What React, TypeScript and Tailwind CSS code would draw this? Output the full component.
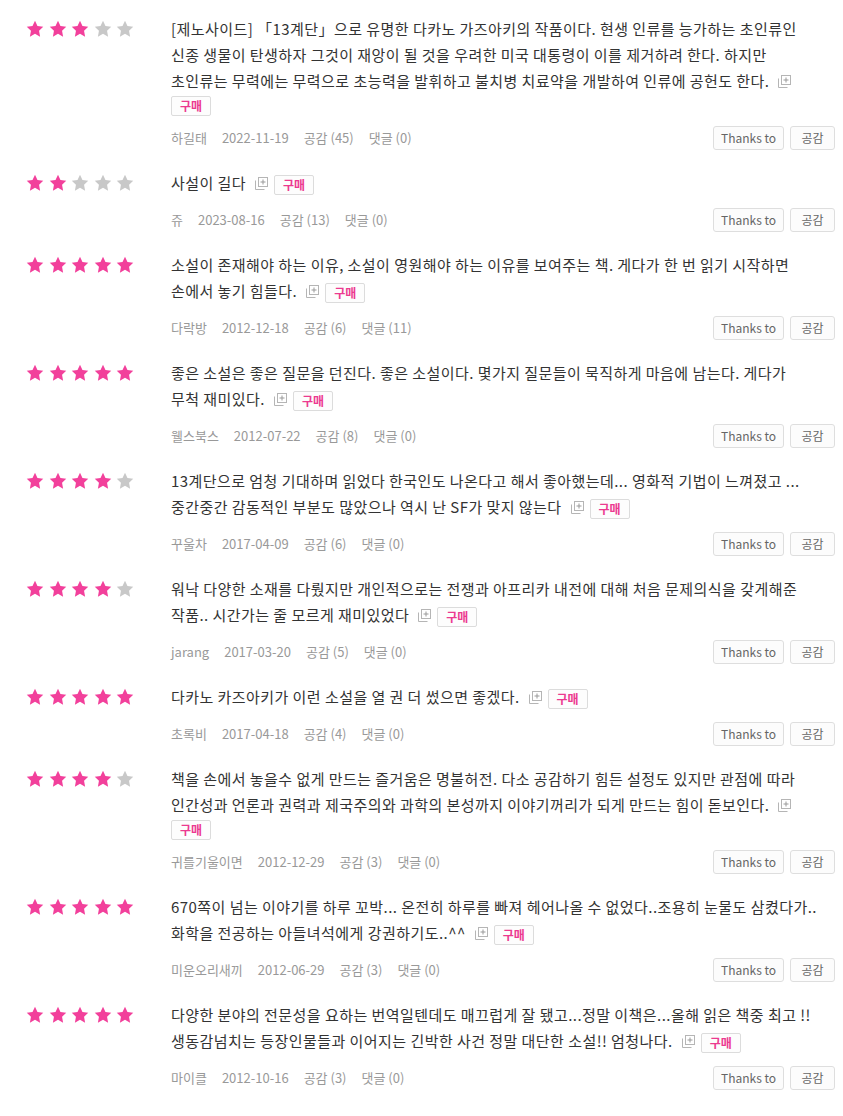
import React from 'react';

type Review = {
  stars: number;
  lines: string[];
  badgeOwnLine?: boolean;
  user: string;
  date: string;
  likes: number;
  comments: number;
};

const reviews: Review[] = [
  {
    stars: 3,
    lines: [
      '[제노사이드] 「13계단」으로 유명한 다카노 가즈아키의 작품이다. 현생 인류를 능가하는 초인류인',
      '신종 생물이 탄생하자 그것이 재앙이 될 것을 우려한 미국 대통령이 이를 제거하려 한다. 하지만',
      '초인류는 무력에는 무력으로 초능력을 발휘하고 불치병 치료약을 개발하여 인류에 공헌도 한다.',
    ],
    badgeOwnLine: true,
    user: '하길태',
    date: '2022-11-19',
    likes: 45,
    comments: 0,
  },
  { stars: 2, lines: ['사설이 길다'], user: '쥬', date: '2023-08-16', likes: 13, comments: 0 },
  {
    stars: 5,
    lines: [
      '소설이 존재해야 하는 이유, 소설이 영원해야 하는 이유를 보여주는 책. 게다가 한 번 읽기 시작하면',
      '손에서 놓기 힘들다.',
    ],
    user: '다락방',
    date: '2012-12-18',
    likes: 6,
    comments: 11,
  },
  {
    stars: 5,
    lines: ['좋은 소설은 좋은 질문을 던진다. 좋은 소설이다. 몇가지 질문들이 묵직하게 마음에 남는다. 게다가', '무척 재미있다.'],
    user: '웰스북스',
    date: '2012-07-22',
    likes: 8,
    comments: 0,
  },
  {
    stars: 4,
    lines: [
      '13계단으로 엄청 기대하며 읽었다 한국인도 나온다고 해서 좋아했는데... 영화적 기법이 느껴졌고 ...',
      '중간중간 감동적인 부분도 많았으나 역시 난 SF가 맞지 않는다',
    ],
    user: '꾸울차',
    date: '2017-04-09',
    likes: 6,
    comments: 0,
  },
  {
    stars: 4,
    lines: [
      '워낙 다양한 소재를 다뤘지만 개인적으로는 전쟁과 아프리카 내전에 대해 처음 문제의식을 갖게해준',
      '작품.. 시간가는 줄 모르게 재미있었다',
    ],
    user: 'jarang',
    date: '2017-03-20',
    likes: 5,
    comments: 0,
  },
  { stars: 5, lines: ['다카노 카즈아키가 이런 소설을 열 권 더 썼으면 좋겠다.'], user: '초록비', date: '2017-04-18', likes: 4, comments: 0 },
  {
    stars: 4,
    lines: [
      '책을 손에서 놓을수 없게 만드는 즐거움은 명불허전. 다소 공감하기 힘든 설정도 있지만 관점에 따라',
      '인간성과 언론과 권력과 제국주의와 과학의 본성까지 이야기꺼리가 되게 만드는 힘이 돋보인다.',
    ],
    badgeOwnLine: true,
    user: '귀를기울이면',
    date: '2012-12-29',
    likes: 3,
    comments: 0,
  },
  {
    stars: 5,
    lines: [
      '670쪽이 넘는 이야기를 하루 꼬박... 온전히 하루를 빠져 헤어나올 수 없었다..조용히 눈물도 삼켰다가..',
      '화학을 전공하는 아들녀석에게 강권하기도..^^',
    ],
    user: '미운오리새끼',
    date: '2012-06-29',
    likes: 3,
    comments: 0,
  },
  {
    stars: 5,
    lines: [
      '다양한 분야의 전문성을 요하는 번역일텐데도 매끄럽게 잘 됐고...정말 이책은...올해 읽은 책중 최고 !!',
      '생동감넘치는 등장인물들과 이어지는 긴박한 사건 정말 대단한 소설!! 엄청나다.',
    ],
    user: '마이클',
    date: '2012-10-16',
    likes: 3,
    comments: 0,
  },
];

const Star = ({ on }: { on: boolean }) => (
  <svg width="18" height="18" viewBox="0 0 24 24" className={on ? 'fill-[#f2409b]' : 'fill-[#c8c8c8]'}>
    <polygon points="12,1 15.3,8 23,9 17.4,14.4 18.8,22.2 12,18.4 5.2,22.2 6.6,14.4 1,9 8.7,8" />
  </svg>
);

const MoreIcon = () => (
  <svg width="13" height="13" viewBox="0 0 13 13" className="inline-block align-[-1px] ml-[9px]">
    <path d="M0.5 3.5 V12.5 H9.5" fill="none" stroke="#b5b5b5" />
    <rect x="3.5" y="0.5" width="9" height="9" fill="#fff" stroke="#b5b5b5" />
    <path d="M8 2.5 V7.5 M5.5 5 H10.5" stroke="#999" />
  </svg>
);

const Badge = ({ inline }: { inline?: boolean }) => (
  <span
    className={`inline-flex items-center justify-center w-[40px] h-[20px] border border-[#dcdcdc] rounded-[2px] bg-[#fdfdfd] text-[12px] font-bold tracking-normal text-[#ec3a90] leading-none align-middle ${
      inline ? 'ml-[6px]' : ''
    }`}
  >
    구매
  </span>
);

function Row({ r }: { r: Review }) {
  const last = r.lines.length - 1;
  return (
    <div className="flex">
      <div className="w-[171px] shrink-0 pl-[26px] pt-[4px] flex gap-[4.5px]">
        {[0, 1, 2, 3, 4].map((i) => (
          <Star key={i} on={i < r.stars} />
        ))}
      </div>
      <div className="flex-1 pr-[8px]">
        <div className="text-[15px] tracking-[0.45px] leading-[26px] text-[#333]">
          {r.lines.map((l, i) => (
            <div key={i} className="whitespace-nowrap">
              {l}
              {i === last && (
                <>
                  <MoreIcon />
                  {!r.badgeOwnLine && <Badge inline />}
                </>
              )}
            </div>
          ))}
          {r.badgeOwnLine && (
            <div className="h-[20px] pt-[2px] leading-none">
              <Badge />
            </div>
          )}
        </div>
        <div className="mt-[12px] h-[24px] flex items-center justify-between">
          <div className="flex gap-[15px] text-[13px] text-[#999]">
            <span>{r.user}</span>
            <span>{r.date}</span>
            <span>공감 ({r.likes})</span>
            <span>댓글 ({r.comments})</span>
          </div>
          <div className="flex gap-[6px] text-[12px] text-[#666]">
            <button className="w-[71px] h-[24px] border border-[#dedede] rounded-[3px] bg-[#fcfcfc]">Thanks to</button>
            <button className="w-[45px] h-[24px] border border-[#dedede] rounded-[3px] bg-[#fcfcfc]">공감</button>
          </div>
        </div>
      </div>
    </div>
  );
}

export default function App() {
  return (
    <div
      className="w-[843px] min-h-[1116px] bg-white pt-[16px] flex flex-col gap-[20px]"
      style={{ fontFamily: '"Noto Sans CJK KR", "Noto Sans", sans-serif' }}
    >
      {reviews.map((r, i) => (
        <Row key={i} r={r} />
      ))}
    </div>
  );
}
